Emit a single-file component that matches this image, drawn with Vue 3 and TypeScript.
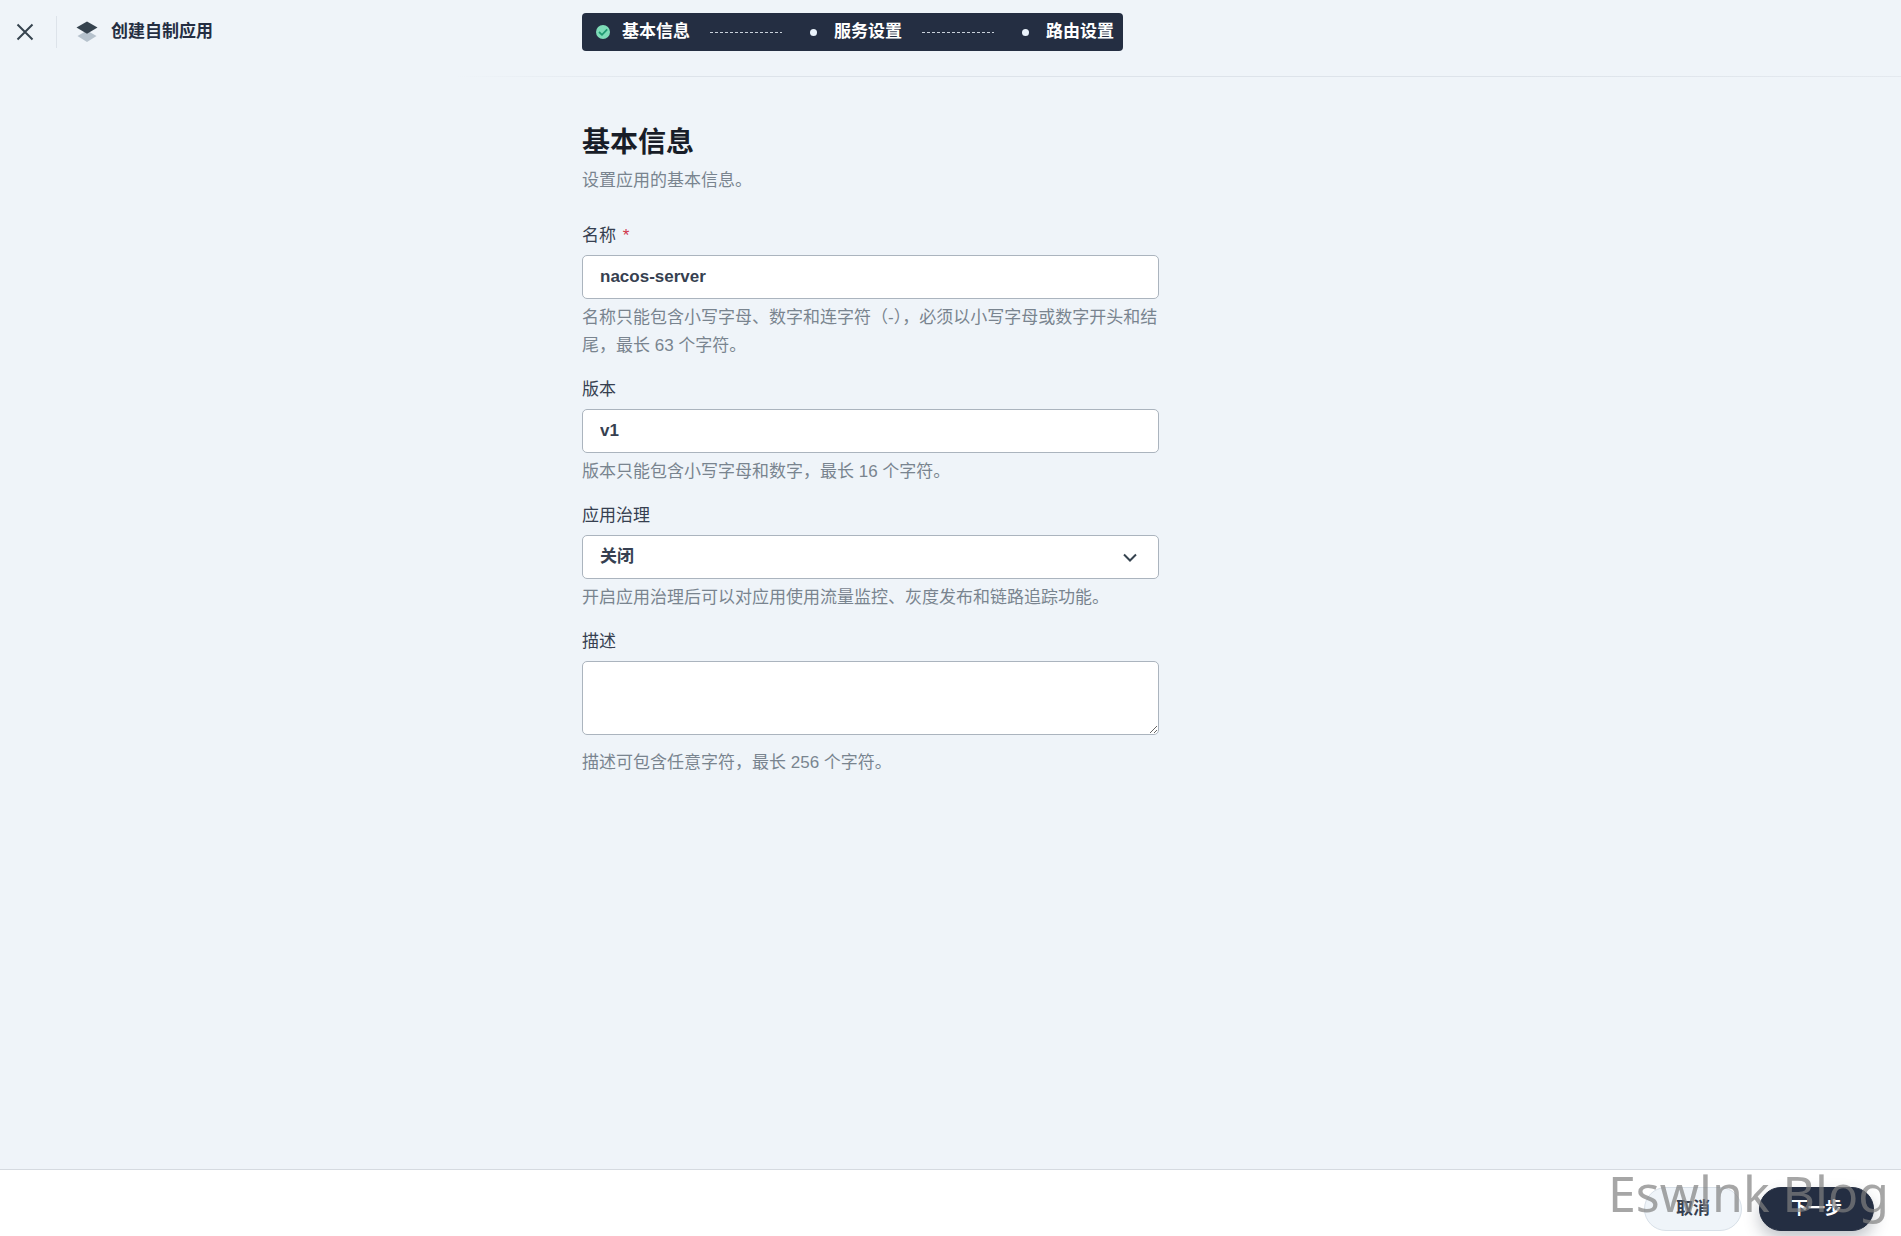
<script setup lang="ts">
import { ref } from 'vue'

interface Step {
  title: string
  done: boolean
}

const steps: Step[] = [
  { title: '基本信息', done: true },
  { title: '服务设置', done: false },
  { title: '路由设置', done: false },
]

const name = ref('nacos-server')
const version = ref('v1')
const governance = ref('off')
const description = ref('')
</script>

<template>
  <div class="page">
    <header class="header">
      <div class="header-side">
        <button class="close" type="button" aria-label="关闭窗口">
          <svg width="18" height="18" viewBox="0 0 18 18" fill="none" stroke="#36434f" stroke-width="2">
            <path d="M1.5 1.5 16.5 16.5M16.5 1.5 1.5 16.5" />
          </svg>
        </button>
        <div class="app-title">
          <svg width="22" height="22" viewBox="0 0 22 22">
            <path d="M11 9.5 20.5 15 11 21 1.500 15z" fill="#b6c2cd" />
            <path d="M11 .5 21.500 6.600 11 12.800 .5 6.600z" fill="#36434f" />
          </svg>
          <span>创建自制应用</span>
        </div>
      </div>
      <div class="column">
        <ol class="steps">
          <li v-for="(step, i) in steps" :key="step.title" class="step">
            <span v-if="i > 0" class="dash"></span>
            <svg v-if="step.done" class="check" width="14" height="14" viewBox="0 0 14 14">
              <circle cx="7" cy="7" r="7" fill="#7edcb8" />
              <path d="M3 7 6 9.800 11.200 4.400" fill="none" stroke="#1f9a72" stroke-width="1.800" />
            </svg>
            <span v-else class="dot"></span>
            <span>{{ step.title }}</span>
          </li>
        </ol>
      </div>
      <div class="header-side"></div>
    </header>

    <main class="column main">
      <h1>基本信息</h1>
      <p class="subtitle">设置应用的基本信息。</p>
      <form class="form">
        <div class="field">
          <label for="name">名称 <span class="required">*</span></label>
          <input id="name" v-model="name" type="text" />
          <p>名称只能包含小写字母、数字和连字符（-），必须以小写字母或数字开头和结尾，最长 63 个字符。</p>
        </div>
        <div class="field">
          <label for="version">版本</label>
          <input id="version" v-model="version" type="text" />
          <p>版本只能包含小写字母和数字，最长 16 个字符。</p>
        </div>
        <div class="field">
          <label for="governance">应用治理</label>
          <div class="select">
            <select id="governance" v-model="governance">
              <option value="off">关闭</option>
              <option value="on">开启</option>
            </select>
            <svg class="arrow" width="14" height="10" viewBox="0 0 14 10" fill="none" stroke="#36434f" stroke-width="2">
              <path d="M1 1.500 7 7.500 13 1.500" />
            </svg>
          </div>
          <p>开启应用治理后可以对应用使用流量监控、灰度发布和链路追踪功能。</p>
        </div>
        <div class="field">
          <label for="description">描述</label>
          <textarea id="description" v-model="description"></textarea>
          <p>描述可包含任意字符，最长 256 个字符。</p>
        </div>
      </form>
    </main>

    <footer class="footer">
      <button class="btn" type="button">取消</button>
      <button class="btn primary" type="button">下一步</button>
      <span class="watermark">Eswlnk Blog</span>
    </footer>
  </div>
</template>

<style>
body {
  margin: 0;
}
</style>

<style scoped>
* {
  box-sizing: border-box;
}
.page {
  display: flex;
  flex-direction: column;
  min-height: 100vh;
  background: #eff4f9;
  color: #363f50;
  font: 17px/28px "Liberation Sans", "Noto Sans CJK SC", sans-serif;
}
button,
input,
select,
textarea {
  font: inherit;
  color: inherit;
}
.header {
  display: flex;
  height: 77px;
  padding-top: 13px;
  border-bottom: 1px solid;
  border-image: linear-gradient(to right, #eff4f9 24%, #dde3ea 36%, #dde3ea 80%, #e4e9ef) 1;
}
.header-side {
  display: flex;
  flex: 1;
  height: 38px;
  align-items: center;
}
.close {
  display: flex;
  width: 57px;
  height: 32px;
  padding: 0 0 0 16px;
  align-items: center;
  border: 0;
  border-right: 1px solid #dde3ea;
  background: none;
}
.app-title {
  display: flex;
  gap: 13px;
  align-items: center;
  padding-left: 19px;
  color: #242e42;
  font-weight: 700;
  white-space: nowrap;
}
.column {
  width: 100%;
  max-width: 737px;
}
.steps {
  display: inline-flex;
  height: 38px;
  margin: 0;
  padding: 0 9px 0 14px;
  align-items: center;
  border-radius: 4px;
  background: #242e42;
  color: #fff;
  font-weight: 700;
  list-style: none;
}
.step {
  display: flex;
  align-items: center;
  white-space: nowrap;
}
.check {
  margin-right: 12px;
}
.dot {
  width: 7px;
  height: 7px;
  margin-right: 17px;
  border-radius: 50%;
  background: #eaf2fb;
}
.dash {
  width: 72px;
  height: 1px;
  margin: 0 28px 0 20px;
  background: repeating-linear-gradient(to right, #c8d0da 0 3px, transparent 3px 5px);
}
.main {
  flex: 1;
  margin: 0 auto;
  padding: 46px 0 40px;
}
h1 {
  margin: 0 0 4px;
  color: #181d28;
  font-size: 28px;
  line-height: 40px;
}
p {
  margin: 0;
  color: #79848f;
}
.subtitle {
  margin-bottom: 27px;
}
.form {
  display: flex;
  max-width: 577px;
  flex-direction: column;
  gap: 16px;
}
.field {
  display: flex;
  flex-direction: column;
}
label {
  margin-bottom: 5px;
}
.required {
  margin-left: 2px;
  color: #d0364a;
}
input,
select,
textarea {
  width: 100%;
  height: 44px;
  margin: 0 0 5px;
  padding: 0 17px;
  border: 1px solid #abb4be;
  border-radius: 5px;
  outline: 0;
  background: #fff;
  font-weight: 700;
}
select {
  display: block;
  appearance: none;
}
textarea {
  height: 74px;
  margin-bottom: 14px;
  resize: vertical;
}
.select {
  position: relative;
}
.arrow {
  position: absolute;
  top: 18px;
  right: 22px;
  pointer-events: none;
}
.footer {
  position: relative;
  display: flex;
  gap: 17px;
  justify-content: flex-end;
  padding: 17px 27px 5px;
  border-top: 1px solid #d5dae0;
  background: #fff;
}
.btn {
  height: 44px;
  padding: 0 31px;
  border: 1px solid #d8e0e8;
  border-radius: 22px;
  background: #eff4f9;
  font-weight: 700;
}
.primary {
  border-color: #242e42;
  background: #242e42;
  box-shadow: 0 8px 16px rgba(36, 46, 66, 0.28);
  color: #fff;
}
.watermark {
  position: absolute;
  right: 12px;
  bottom: 9px;
  color: rgba(128, 128, 128, 0.7);
  font: 50px/68px "Noto Sans", "Open Sans", sans-serif;
  white-space: nowrap;
  pointer-events: none;
}
</style>
